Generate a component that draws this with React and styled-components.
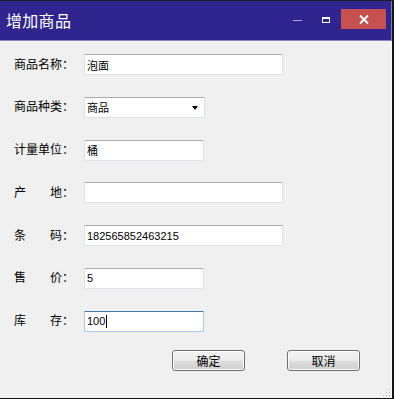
import React from 'react';
import styled, { createGlobalStyle } from 'styled-components';

const Global = createGlobalStyle`
  html, body {
    margin: 0;
    padding: 0;
    background: #f0f0f0;
  }
  * {
    box-sizing: border-box;
  }
`;

const Window = styled.div`
  width: 394px;
  height: 399px;
  display: flex;
  flex-direction: column;
  border-top: 1px solid #1e1e2a;
  border-right: 2px solid #161616;
  border-bottom: 1px solid #161616;
  background: #f0f0f0;
  position: relative;
  font-family: "Noto Sans CJK SC", "Liberation Sans", sans-serif;
`;

const TitleBar = styled.div`
  height: 40px;
  flex: none;
  display: flex;
  align-items: flex-start;
  background: #30248f;
  border-bottom: 1px solid #8c86c6;
  border-right: 1px solid #7d78bd;
  padding: 0 5px 0 6px;
`;

const Title = styled.div`
  color: #fff;
  font-size: 16px;
  line-height: 38px;
  letter-spacing: 0.3px;
  flex: 1;
`;

const MinIcon = styled.div`
  width: 9px;
  height: 1px;
  background: #a8a2dc;
  margin: 19px 20px 0 0;
`;

const MaxIcon = styled.div`
  width: 8px;
  height: 6px;
  border: 1px solid #fff;
  border-top-width: 2px;
  margin: 16px 11px 0 0;
`;

const CloseBtn = styled.div`
  width: 45px;
  height: 20px;
  margin-top: 8px;
  background: #c75050;
  display: flex;
  align-items: center;
  justify-content: center;
`;

const Body = styled.div`
  flex: 1;
  display: flex;
  flex-direction: column;
  padding: 13px 0 0 14px;
  box-shadow: inset -1px 0 #fafafa;
`;

const Form = styled.div`
  display: flex;
  flex-direction: column;
  gap: 21.8px;
`;

const Row = styled.div`
  display: flex;
  align-items: center;
  height: 21px;
`;

const Label = styled.div`
  width: 70px;
  display: flex;
  font-size: 12px;
  color: #000;
  margin-top: -3px;
`;

const LabelChars = styled.span`
  width: 48px;
  display: flex;
  justify-content: space-between;
`;

const Field = styled.div`
  width: ${p => p.$w}px;
  height: 21px;
  background: #fff;
  border: 1px solid ${p => (p.$focus ? '#a7cbe6' : '#dde1e8')};
  border-top-color: ${p => (p.$focus ? '#3d7bad' : '#abadb3')};
  display: flex;
  align-items: center;
  padding-left: 2px;
  font-family: "Liberation Sans", "Noto Sans CJK SC", sans-serif;
  font-size: 11px;
  color: #000;
`;

const Caret = styled.span`
  display: inline-block;
  width: 1px;
  height: 13px;
  background: #000;
  margin-left: 1px;
`;

const Combo = styled(Field)`
  justify-content: space-between;
  padding-right: 6px;
`;

const Arrow = styled.span`
  width: 0;
  height: 0;
  border-left: 3.5px solid transparent;
  border-right: 3.5px solid transparent;
  border-top: 4px solid #000;
  margin-top: 1px;
`;

const Buttons = styled.div`
  display: flex;
  gap: 42px;
  margin: 18px 0 0 158px;
`;

const Button = styled.div`
  width: 73px;
  height: 21px;
  border: 1px solid #707070;
  border-radius: 3px;
  background: linear-gradient(#f3f3f3 0%, #ebebeb 50%, #dddddd 51%, #cfcfcf 100%);
  box-shadow: inset 0 0 0 1px #fcfcfc;
  display: flex;
  align-items: center;
  justify-content: center;
  font-size: 12px;
  color: #000;
`;

const Grip = styled.svg`
  position: absolute;
  right: 1px;
  bottom: 1px;
`;

const fields = [
  { label: ['商', '品', '名', '称'], value: '泡面', w: 199 },
  { label: ['商', '品', '种', '类'], value: '商品', w: 121, combo: true },
  { label: ['计', '量', '单', '位'], value: '桶', w: 120 },
  { label: ['产', '地'], value: '', w: 199 },
  { label: ['条', '码'], value: '182565852463215', w: 199 },
  { label: ['售', '价'], value: '5', w: 120 },
  { label: ['库', '存'], value: '100', w: 120, focus: true },
];

export default function App() {
  return (
    <>
      <Global />
      <Window>
        <TitleBar>
          <Title>增加商品</Title>
          <MinIcon />
          <MaxIcon />
          <CloseBtn>
            <svg width="10" height="9" viewBox="0 0 10 9">
              <path d="M1 0.5 L9 8.5 M9 0.5 L1 8.5" stroke="#fff" strokeWidth="2" />
            </svg>
          </CloseBtn>
        </TitleBar>
        <Body>
          <Form>
            {fields.map((f, i) => (
              <Row key={i}>
                <Label>
                  <LabelChars>
                    {f.label.map((c, j) => (
                      <span key={j}>{c}</span>
                    ))}
                  </LabelChars>
                  ：
                </Label>
                {f.combo ? (
                  <Combo $w={f.w}>
                    {f.value}
                    <Arrow />
                  </Combo>
                ) : (
                  <Field $w={f.w} $focus={f.focus}>
                    {f.value}
                    {f.focus && <Caret />}
                  </Field>
                )}
              </Row>
            ))}
          </Form>
          <Buttons>
            <Button>确定</Button>
            <Button>取消</Button>
          </Buttons>
        </Body>
        <Grip width="10" height="10" viewBox="0 0 10 10">
          {[[8, 2], [8, 5], [8, 8], [5, 5], [5, 8], [2, 8]].map(([x, y], i) => (
            <rect key={i} x={x} y={y} width="1" height="1" fill="#b8b8b8" />
          ))}
        </Grip>
      </Window>
    </>
  );
}
